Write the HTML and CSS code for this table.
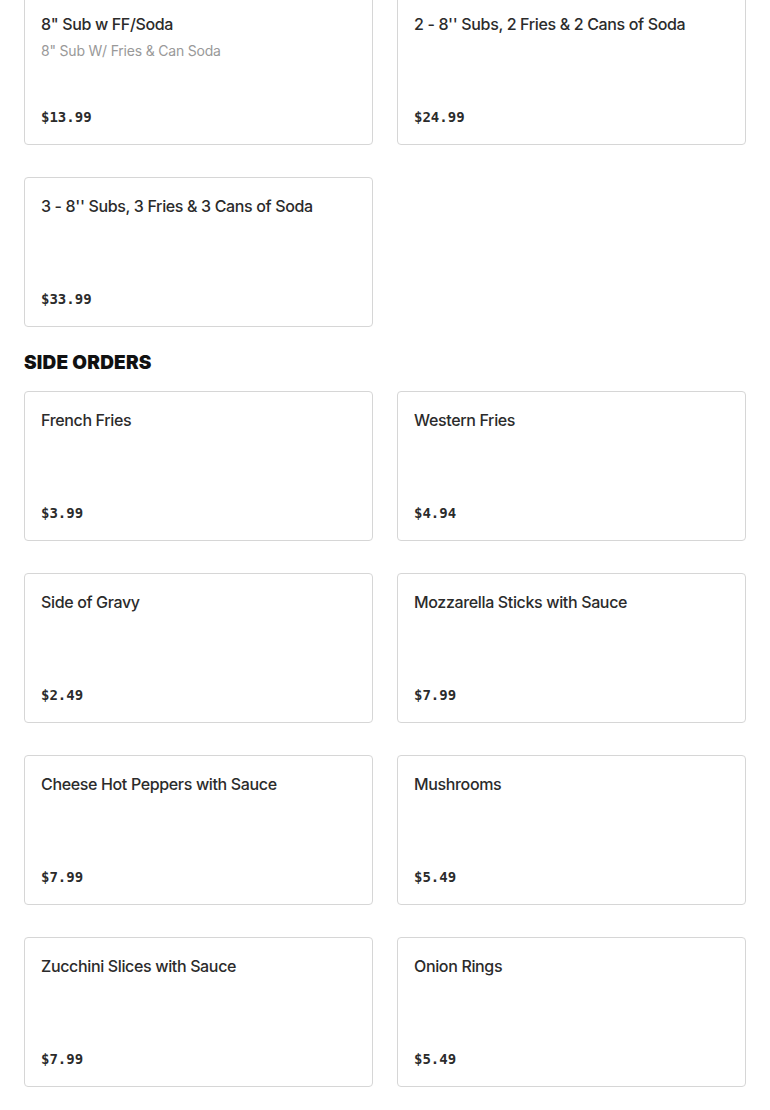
FILE: index.html
```html
<!DOCTYPE html>
<html>
<head>
<meta charset="utf-8">
<link rel="stylesheet" href="styles.css">
</head>
<body>
<div class="page">
  <div class="grid">
    <div class="card">
      <div class="name">8" Sub w FF/Soda</div>
      <div class="desc">8" Sub W/ Fries &amp; Can Soda</div>
      <div class="price">$13.99</div>
    </div>
    <div class="card">
      <div class="name">2 - 8'' Subs, 2 Fries &amp; 2 Cans of Soda</div>
      <div class="price">$24.99</div>
    </div>
    <div class="card">
      <div class="name">3 - 8'' Subs, 3 Fries &amp; 3 Cans of Soda</div>
      <div class="price">$33.99</div>
    </div>
  </div>
  <h2 class="section">SIDE ORDERS</h2>
  <div class="grid">
    <div class="card"><div class="name">French Fries</div><div class="price">$3.99</div></div>
    <div class="card"><div class="name">Western Fries</div><div class="price">$4.94</div></div>
    <div class="card"><div class="name">Side of Gravy</div><div class="price">$2.49</div></div>
    <div class="card"><div class="name">Mozzarella Sticks with Sauce</div><div class="price">$7.99</div></div>
    <div class="card"><div class="name">Cheese Hot Peppers with Sauce</div><div class="price">$7.99</div></div>
    <div class="card"><div class="name">Mushrooms</div><div class="price">$5.49</div></div>
    <div class="card"><div class="name">Zucchini Slices with Sauce</div><div class="price">$7.99</div></div>
    <div class="card"><div class="name">Onion Rings</div><div class="price">$5.49</div></div>
  </div>
</div>
</body>
</html>
```
FILE: styles.css
```css
html, body { margin: 0; padding: 0; background: #fff; }
body { font-family: Inter, "Noto Sans", sans-serif; color: #2b2b2b; }
.page { padding: 0 24px; margin-top: -5px; }
.grid { display: grid; grid-template-columns: 1fr 1fr; column-gap: 24px; row-gap: 32px; }
.card {
  box-sizing: border-box;
  min-height: 150px;
  border: 1px solid #d6d6d6;
  border-radius: 4px;
  padding: 16px 16px 15px;
  display: flex;
  flex-direction: column;
}
.name { font-size: 16px; font-weight: 500; line-height: 24px; letter-spacing: -0.35px; color: #2b2b2b; }
.desc { font-size: 14px; line-height: 20px; letter-spacing: -0.2px; color: #999; margin-top: 5px; }
.price { margin-top: auto; font-family: "DejaVu Sans Mono", monospace; font-weight: bold; font-size: 14px; line-height: 24px; color: #2b2b2b; }
.section { margin: 24px 0 16px; font-size: 19px; line-height: 24px; font-weight: 900; letter-spacing: 0.2px; color: #111; }
```
